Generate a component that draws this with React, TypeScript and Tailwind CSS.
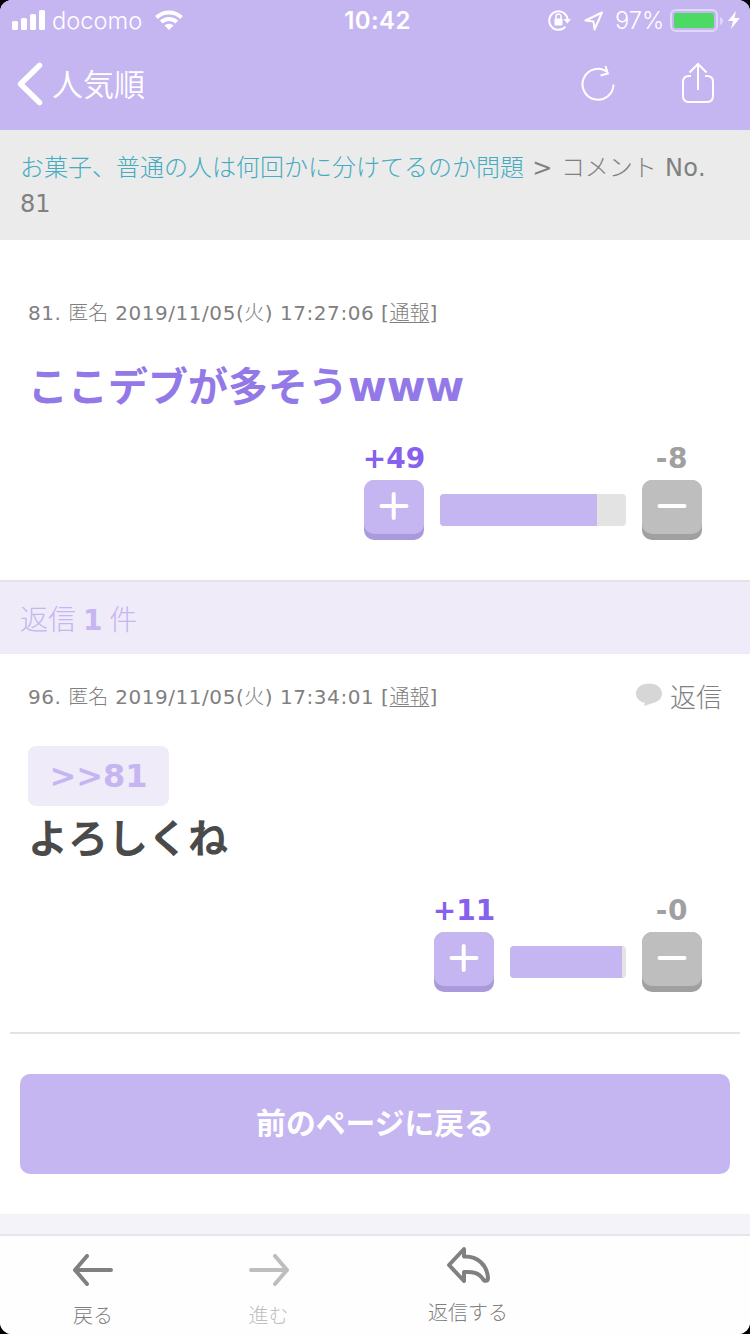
import React from 'react';

interface VoteProps {
    plus: string;
    minus: string;
    barClass: string;
    fill: number;
}

const Vote: React.FC<VoteProps> = ({ plus, minus, barClass, fill }) => {
    return (
        <div className="flex justify-end items-end gap-4 pr-5 font-bold text-[28px] leading-8">
            <div className="w-15 flex flex-col items-center">
                <span className="h-[37px] whitespace-nowrap text-[#8760ee]">{plus}</span>
                <button className="flex flex-col w-15 h-15 rounded-[10px] overflow-hidden bg-[#ab99de]">
                    <span className="flex items-center justify-center w-full h-[54px] rounded-[10px] bg-[#c5b6f1]">
                        <svg width="30" height="30" viewBox="0 0 30 30" stroke="#fff" strokeWidth="4" strokeLinecap="round"><path d="M2.5 14h25M14.7 2v24"/></svg>
                    </span>
                </button>
            </div>
            <div className={"h-8 mb-3.5 rounded overflow-hidden bg-[#e3e3e3] " + barClass}>
                <div className="h-full bg-[#c5b6f1]" style={{ width: fill + "%" }}></div>
            </div>
            <div className="w-15 flex flex-col items-center">
                <span className="h-[37px] whitespace-nowrap tracking-[0.8px] text-[#a0a0a0]">{minus}</span>
                <button className="flex flex-col w-15 h-15 rounded-[10px] overflow-hidden bg-[#a0a0a0]">
                    <span className="flex items-center justify-center w-full h-[54px] rounded-[10px] bg-[#bebebe]">
                        <svg width="30" height="30" viewBox="0 0 30 30" stroke="#fff" strokeWidth="4" strokeLinecap="round"><path d="M2.5 14h25"/></svg>
                    </span>
                </button>
            </div>
        </div>
    )
}

const Meta: React.FC<{ no: number, time: string }> = ({ no, time }) => {
    return (
        <p className="text-xl leading-7 whitespace-nowrap tracking-[0.54px] text-[#808080]">
            {no}. <span className="tracking-normal font-light">匿名</span> 2019/11/05(<span className="font-light">火</span>) {time} [<a className="tracking-normal font-light underline underline-offset-2 decoration-1">通報</a>]
        </p>
    )
}

const StatusBar: React.FC = () => {
    return (
        <div className="flex items-center h-10 pl-3 pr-2.5 text-2xl font-[Inter,'Noto_Sans_CJK_JP',sans-serif]">
            <div className="flex flex-1 items-center">
                <svg width="33" height="20" viewBox="0 0 33 20" fill="#fff">
                    <rect x="0" y="11" width="6" height="9" rx="1.5"/>
                    <rect x="9" y="8" width="6" height="12" rx="1.5"/>
                    <rect x="18" y="4" width="6" height="16" rx="1.5"/>
                    <rect x="27" y="0" width="6" height="20" rx="1.5"/>
                </svg>
                <span className="ml-[7px] mt-0.5 w-[91px] whitespace-nowrap text-[23.7px] font-light">docomo</span>
                <svg className="ml-3" width="28" height="20" viewBox="0 0 28 20" fill="none" stroke="#fff" strokeWidth="4">
                    <path d="M1.5 7.5a18 18 0 0 1 25 0M6.2 12a11.4 11.4 0 0 1 15.6 0"/>
                    <path d="M9.5 15.6a6.6 6.6 0 0 1 9 0L14 20z" fill="#fff" stroke="none"/>
                </svg>
            </div>
            <span className="mt-0.5 ml-[3px] font-semibold tracking-[0.4px]">10:42</span>
            <div className="flex flex-1 items-center justify-end">
                <svg width="24" height="22" viewBox="0 0 24 22" fill="none" stroke="#fff" strokeWidth="2">
                    <path d="M17.4 17.6A9.2 9.2 0 1 1 19.6 10.5"/>
                    <path d="M15.5 10h7.5l-3.7 4.5z" fill="#fff" stroke="none"/>
                    <rect x="6.5" y="9.5" width="8" height="7" rx="1" fill="#fff" stroke="none"/>
                    <path d="M8 10V7.6a2.5 2.5 0 0 1 5 0V10" strokeWidth="1.5"/>
                </svg>
                <svg className="ml-3 mt-px" width="20" height="20" viewBox="0 0 20 20" fill="none" stroke="#fff" strokeWidth="2" strokeLinejoin="round">
                    <path d="M1.500 9.500 18 1.500 10.500 18.500 9.500 10.500z"/>
                </svg>
                <span className="ml-[11px] mt-0.5 w-[49px] whitespace-nowrap text-[23.7px] font-light">97%</span>
                <svg className="ml-1.5 mt-0.5" width="54" height="24" viewBox="0 0 54 24">
                    <rect x="1" y="1" width="46" height="21" rx="5" fill="none" stroke="#e0d8f8" strokeWidth="2"/>
                    <rect x="4" y="4" width="40" height="15" rx="2" fill="#4cd964"/>
                    <path d="M50 8c4 1.500 4 6.500 0 8z" fill="#e0d8f8"/>
                </svg>
                <svg className="ml-1" width="12" height="20" viewBox="0 0 12 20" fill="#fff"><path d="M8 1 0 11h5L3 19l9-11H6.500z"/></svg>
            </div>
        </div>
    )
}

function App() {
    return (
        <div className="w-[750px] h-[1334px] bg-black">
            <div className="flex flex-col h-full rounded-xl overflow-hidden bg-white font-['DejaVu_Sans','Noto_Sans_CJK_JP',sans-serif]">
                <header className="h-[130px] bg-[#c5b6f1] text-white">
                    <StatusBar />
                    <div className="flex items-center h-[86px] pl-[17px] pr-[35px]">
                        <svg className="mt-0.5" width="26" height="44" viewBox="0 0 26 44" fill="none" stroke="#fff" strokeWidth="5.5" strokeLinecap="round" strokeLinejoin="round"><path d="M22.5 3.5 3.5 22l19 18.500"/></svg>
                        <span className="ml-[9px] text-[31px] font-[350] font-['Noto_Sans_CJK_JP',sans-serif]">人気順</span>
                        <svg className="ml-auto" width="34" height="38" viewBox="0 0 34 38" fill="none" stroke="#fff" strokeWidth="2">
                            <path d="M32.500 20.500A15.500 15.500 0 1 1 26.500 8"/>
                            <path d="M24.500 2l2.300 7.500-7.300 2"/>
                        </svg>
                        <svg className="ml-[66px]" width="34" height="42" viewBox="0 0 34 42" fill="none" stroke="#fff" strokeWidth="2">
                            <path d="M10 14H8q-6 0-6 6v14q0 6 6 6h18q6 0 6-6V20q0-6-6-6h-2"/>
                            <path d="M17 28V2M8.500 10.500 17 2l8.500 8.500"/>
                        </svg>
                    </div>
                </header>

                <nav className="h-[110px] px-5 pt-5 bg-[#ebebeb] text-2xl leading-9 text-[#808080]">
                    <a className="font-light text-[#44abc0]">お菓子、普通の人は何回かに分けてるのか問題</a><span className="tracking-[0.5px]"> &gt; </span><span className="font-light">コメント</span><span className="tracking-[0.4px]"> No.</span><br/>81
                </nav>

                <article className="h-[340px] px-7 pt-[59px]">
                    <Meta no={81} time="17:27:06" />
                    <h1 className="mt-[30px] mb-[26px] text-[40px] leading-[60px] h-[60px] font-bold whitespace-nowrap text-[#9379e8]">ここデブが多そう<span className="text-[42px]">www</span></h1>
                    <Vote plus="+49" minus="-8" barClass="w-[186px]" fill={84.4} />
                </article>

                <h2 className="h-[74px] px-5 border-t-2 border-[#e4e4e7] bg-[#efebf9] text-[28px] leading-[78px] text-[#c5b6f1]">
                    <span className="font-light">返信</span> <b className="-mx-0.5 font-bold">1</b> <span className="font-light">件</span>
                </h2>

                <article className="h-[378px] px-7 pt-[29px]">
                    <div className="flex justify-between h-7">
                        <Meta no={96} time="17:34:01" />
                        <div className="flex items-center text-[26px] leading-7 font-light text-[#808080]">
                            <svg className="mr-2 -mt-1" width="26" height="24" viewBox="0 0 26 24" fill="#d6d6d6"><path d="M13 0.500c7.500 0 13 4 13 10 0 5-4 8.500-9 9.500L8 23l1-3C4 19 0 15.500 0 10.500c0-6 5.500-10 13-10z"/></svg>
                            <span className="mt-0.5">返信</span>
                        </div>
                    </div>
                    <a className="flex items-center justify-center w-[141px] h-15 mt-[35px] rounded-lg bg-[#efebf9] text-[32px] font-bold text-[#c5b6f1]">&gt;&gt;81</a>
                    <p className="mt-[3px] mb-[26px] h-[60px] text-[40px] leading-[60px] font-bold text-[#4a4a4a]">よろしくね</p>
                    <Vote plus="+11" minus="-0" barClass="w-[116px]" fill={96.6} />
                </article>

                <div className="mx-2.5 border-t-2 border-[#e3e3e3]"></div>
                <button className="mx-5 my-10 h-[100px] shrink-0 rounded-[10px] bg-[#c5b6f1] text-[29.800px] font-bold text-white">前のページに戻る</button>
                <div className="h-5 bg-[#f5f3fa]"></div>

                <footer className="flex h-[100px] border-t-2 border-[#e6e6e8] bg-[#fefefe] text-xl leading-7 font-light text-[#808080]">
                    <div className="flex flex-col items-center w-[186px] pt-[18px]">
                        <svg width="40" height="32" viewBox="0 0 40 32" fill="none" stroke="#808080" strokeWidth="4" strokeLinecap="round" strokeLinejoin="round"><path d="M38 16H2M14 2 2 16l12 14"/></svg>
                        <span className="mt-4">戻る</span>
                    </div>
                    <div className="flex flex-col items-center w-[165px] pt-[18px] text-[#bebebe]">
                        <svg width="40" height="32" viewBox="0 0 40 32" fill="none" stroke="#bebebe" strokeWidth="4" strokeLinecap="round" strokeLinejoin="round"><path d="M2 16h36M26 2l12 14-12 14"/></svg>
                        <span className="mt-4">進む</span>
                    </div>
                    <div className="flex flex-col items-center w-[234px] pt-[11px]">
                        <svg width="43" height="36" viewBox="0 0 43 36" fill="none" stroke="#808080" strokeWidth="4" strokeLinejoin="round"><path d="M17 2 2 18l15 16V25c10-.5 15 1 19 7 1 2 5 3 5-1C40 18 31 9 17 9.500z"/></svg>
                        <span className="mt-4">返信する</span>
                    </div>
                </footer>
            </div>
        </div>
    )
}

export default App;
